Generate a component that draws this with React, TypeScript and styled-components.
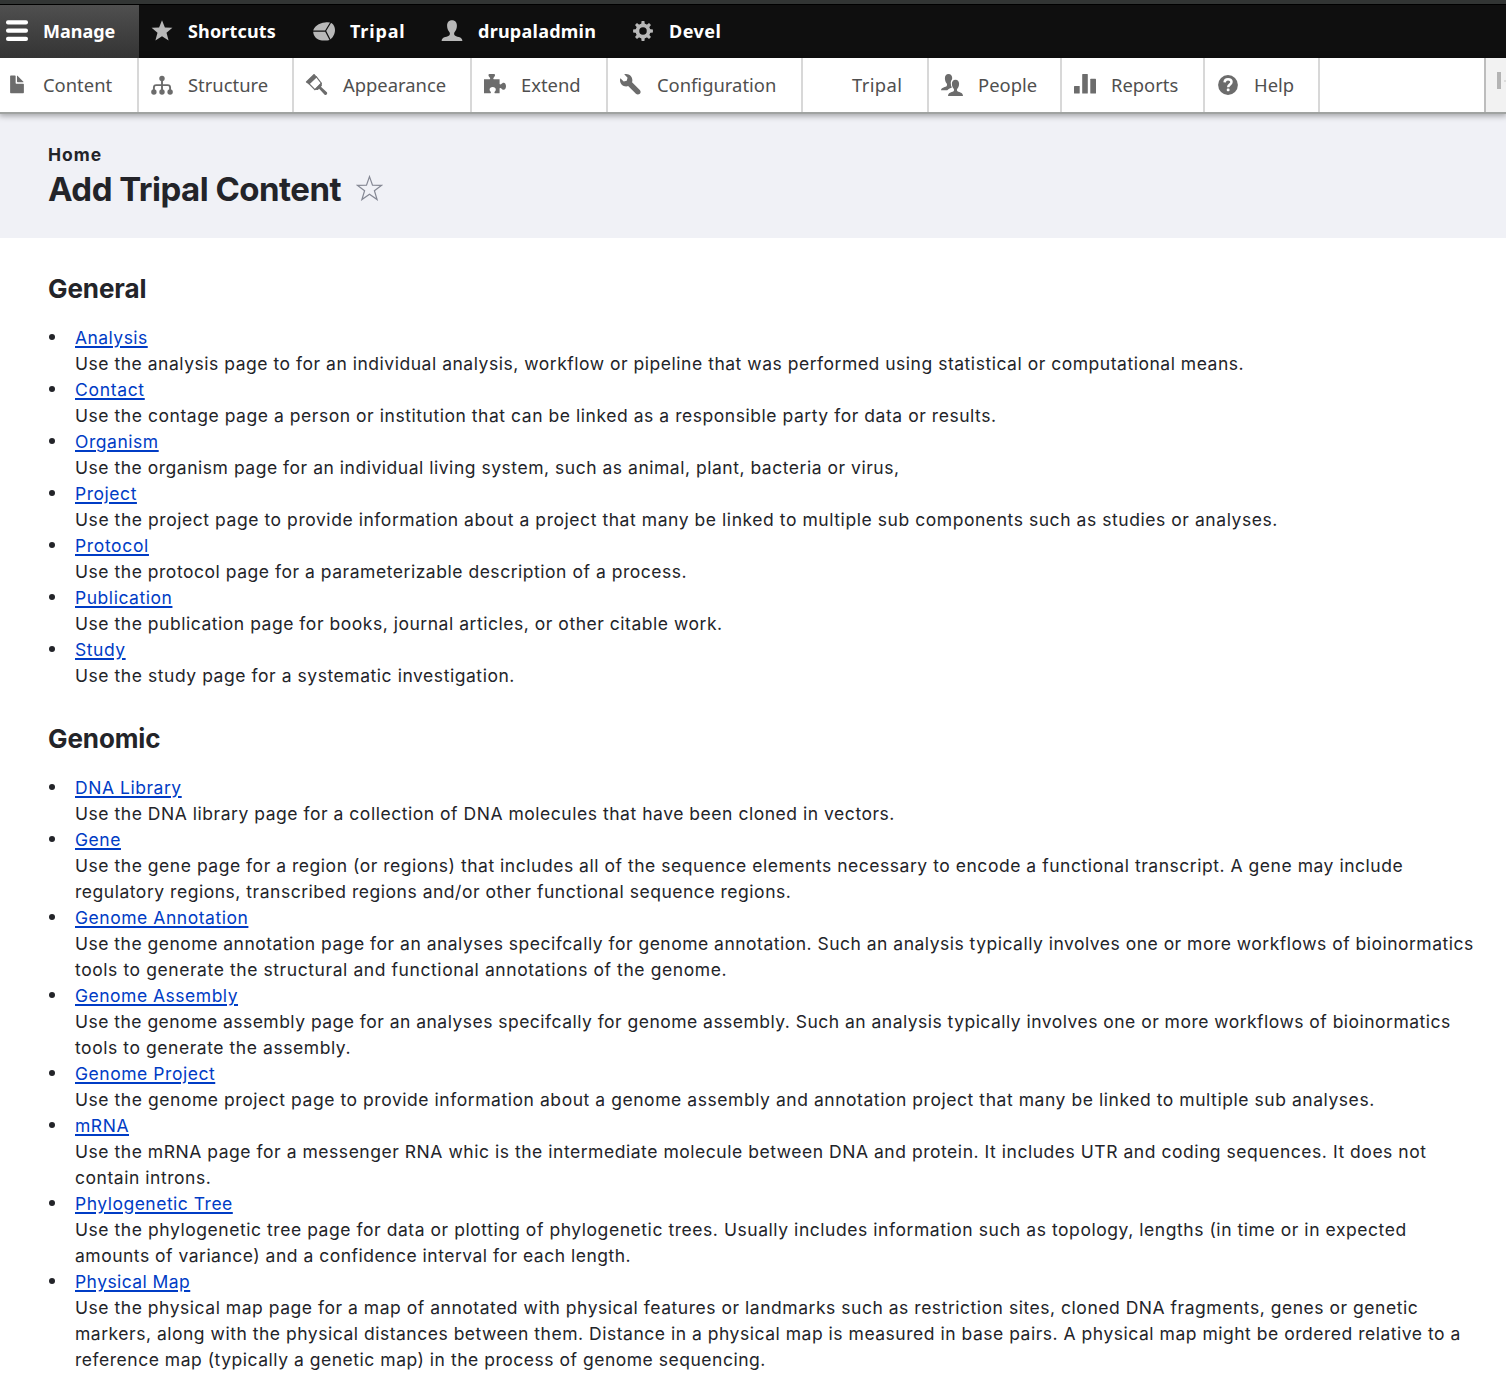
import React from "react";
import styled, { createGlobalStyle } from "styled-components";

const GlobalStyle = createGlobalStyle`
  *, *::before, *::after { box-sizing: border-box; }
  body {
    margin: 0;
    background: #fff;
    color: #232429;
    font-family: Inter, "Noto Sans", sans-serif;
    font-size: 17.5px;
    line-height: 26px;
  }
`;

const Page = styled.div`
  height: 1394px;
  overflow: hidden;
`;

const Toolbar = styled.nav`
  position: relative;
  font-family: "Noto Sans", "Open Sans", sans-serif;
`;

const TopStrip = styled.div`
  height: 5px;
  background: #323534;
  border-bottom: 1px solid #000;
`;

const TabBar = styled.div`
  display: flex;
  height: 53px;
  background: #0f0f0f;
`;

const Tab = styled.a<{ $width: number; $active?: boolean; $tracking?: number }>`
  display: flex;
  align-items: center;
  width: ${(p) => p.$width}px;
  padding-left: ${(p) => (p.$active ? 6 : 12)}px;
  padding-bottom: 2px;
  color: #fff;
  font-size: 18px;
  font-weight: 700;
  letter-spacing: ${(p) => p.$tracking ?? 0.2}px;
  background: ${(p) => (p.$active ? "linear-gradient(#4f4f4f, #343434)" : "transparent")};
`;

const Tray = styled.div`
  display: flex;
  height: 56px;
  background: #fff;
  border-bottom: 2px solid #a0a3a1;
  box-shadow: 0 1px 6px 1px rgba(0, 0, 0, 0.33);
`;

const TrayItem = styled.a<{ $width: number; $first?: boolean; $tracking?: number }>`
  display: flex;
  align-items: center;
  width: ${(p) => p.$width}px;
  padding-left: ${(p) => (p.$first ? 6 : 12)}px;
  border-right: 2px solid #d8d8d8;
  color: #4f4f4f;
  font-size: 18.4px;
  letter-spacing: ${(p) => (p.$tracking ? `${p.$tracking}px` : "normal")};
`;

const IconSlot = styled.span<{ $tone: string; $drop?: boolean }>`
  display: flex;
  flex: none;
  width: 22px;
  height: 22px;
  margin: ${(p) => (p.$drop ? "0 15px 0 0" : "0 15px 1px 0")};
  color: ${(p) => p.$tone};

  svg { width: 22px; height: 22px; overflow: visible; }
`;

const TrayToggle = styled.div`
  display: flex;
  gap: 3px;
  width: 22px;
  margin-left: auto;
  padding: 13.5px 0 0 11px;
  overflow: hidden;
  background: #f2f2f2;
  border-left: 2px solid #bdbdbd;
`;

const ToggleBar = styled.span`
  flex: none;
  width: 4px;
  height: 17px;
  background: #b4b4b4;
`;

const ToggleTip = styled.span`
  flex: none;
  width: 2px;
  height: 2px;
  margin-top: 8px;
  background: #dcdcdc;
`;

const PageHeader = styled.header`
  height: 124px;
  padding: 28px 48px 0;
  background: #f0f1f6;
`;

const Breadcrumb = styled.div`
  font-weight: 700;
  letter-spacing: 1px;
`;

const TitleRow = styled.div`
  display: flex;
  align-items: center;
  gap: 15px;
  height: 40px;
  margin-top: 1px;
`;

const PageTitle = styled.h1`
  margin: 0;
  font-size: 33px;
  font-weight: 700;
  line-height: 40px;
  letter-spacing: -0.52px;
`;

const StarOutline = styled.svg`
  width: 27px;
  height: 26px;
  margin-bottom: 2px;
`;

const Content = styled.main`
  padding: 34px 0 0 48px;
`;

const Section = styled.section`
  margin-bottom: 33px;
`;

const SectionTitle = styled.h2`
  margin: 0 0 19px;
  font-size: 26px;
  font-weight: 700;
  line-height: 34px;
  letter-spacing: -0.1px;
`;

const TypeList = styled.ul`
  margin: 0;
  padding: 0;
  list-style: none;
`;

const TypeItem = styled.li`
  display: flex;

  &::before {
    content: "";
    flex: none;
    width: 6px;
    height: 6px;
    margin: 9px 20px 0 1px;
    border-radius: 50%;
    background: #232429;
  }
`;

const TypeLink = styled.a<{ $tracking?: number }>`
  color: #003cc5;
  letter-spacing: ${(p) => p.$tracking ?? 0.54}px;
  text-decoration: underline;
  text-decoration-thickness: 2px;
  text-underline-offset: 2px;
`;

const Line = styled.div<{ $tracking: number }>`
  letter-spacing: ${(p) => p.$tracking}px;
  white-space: nowrap;
`;

const HamburgerIcon = () => (
  <svg viewBox="0 0 22 22" fill="currentColor">
    <rect x="0" y="0.3" width="22" height="4.2" rx="2" />
    <rect x="0" y="8.5" width="22" height="4.2" rx="2" />
    <rect x="0" y="16.7" width="22" height="4.2" rx="2" />
  </svg>
);

const StarIcon = () => (
  <svg viewBox="0 0 22 22" fill="currentColor">
    <path d="M11 .2l2.900 7.300 7.500.3-5.900 4.900 2.100 7.800L11 16.300l-6.600 4.200 2.100-7.800L.6 7.800l7.500-.3z" />
  </svg>
);

const ChadoIcon = () => (
  <svg viewBox="0 0 22 22">
    <path
      fill="currentColor"
      d="M.2 11.4C.3 7 6 2.700 12 2.400c2.400-.5 5-.3 6.800.8 2.100 1.600 3.200 4.100 3.200 6.800 0 4-2.300 8.300-5.600 10-2 .8-7.400.7-9.700 0C3 19 .1 15 .2 11.400z"
    />
    <path d="M17.800 2.200l-5.300 8.700L17.200 20M12.500 10.900L0 11.200" fill="none" stroke="#0f0f0f" strokeWidth="1.200" />
  </svg>
);

const PersonIcon = () => (
  <svg viewBox="0 0 22 22" fill="currentColor">
    <path d="M11 .3c3.200 0 4.900 2.200 4.900 5.400 0 2.400-.8 4.800-2.400 6.500-.5.9-.6 2.100.1 3 .6.9 2.200 1.300 4.200 1.900 2.300.7 3.500 1.700 3.600 3.900H.6c.1-2.200 1.300-3.200 3.600-3.900 2-.6 3.600-1 4.200-1.900.7-.9.6-2.100.1-3C6.900 10.500 6.100 8.100 6.100 5.700 6.100 2.500 7.800.3 11 .3z" />
  </svg>
);

const GearIcon = () => (
  <svg viewBox="0 0 22 22">
    <g fill="currentColor">
      {[0, 45, 90, 135].map((a) => (
        <path key={a} d="M9.100 5l.5-3.900h2.800l.5 3.900zM9.100 17l.5 3.900h2.800l.5-3.900z" transform={`rotate(${a} 11 11)`} />
      ))}
    </g>
    <circle cx="11" cy="11" r="5.600" fill="none" stroke="currentColor" strokeWidth="3.700" />
  </svg>
);

const FileIcon = () => (
  <svg viewBox="0 0 16 16" fill="currentColor">
    <path d="M12.502 7h-5c-.276 0-.502-.225-.502-.5v-5c0-.275-.225-.5-.5-.5h-3c-.275 0-.5.225-.5.5v12.029c0 .275.225.5.5.5h9.002c.275 0 .5-.225.5-.5v-6.029c0-.275-.225-.5-.5-.5zM8.502 6h4c.275 0 .34-.159.146-.354l-4.293-4.292c-.195-.195-.353-.129-.353.146v4c0 .275.225.5.5.5z" />
  </svg>
);

const StructureIcon = () => (
  <svg viewBox="0 0 22 22" fill="currentColor">
    <circle cx="11" cy="4.400" r="2.700" />
    <circle cx="2.900" cy="18" r="2.700" />
    <circle cx="11" cy="18" r="2.700" />
    <circle cx="19.100" cy="18" r="2.700" />
    <path d="M11 4.400v14M2.900 18v-4.500q0-2.400 2.400-2.400h11.400q2.400 0 2.400 2.400V18" fill="none" stroke="currentColor" strokeWidth="1.900" />
  </svg>
);

const BrushIcon = () => (
  <svg viewBox="0 0 22 22">
    <path d="M3 9.700L10.400 2.800l4.900 6.300-6.400 6.500z" fill="none" stroke="currentColor" strokeWidth="1.100" />
    <path d="M0 7.600L7.500.2c.4-.4.8-.3 1.100.1l2.300 2.600-7.700 7.500L.1 8.500c-.3-.3-.4-.6-.1-.9z" fill="currentColor" />
    <path d="M8.300 15.800l7.400-7.300.2 3.300-1 1 5.700 5.300c.8.8.8 1.700.1 2.400-.7.700-1.600.6-2.300-.1l-5.300-5.700-1.300 1.300z" fill="currentColor" />
  </svg>
);

const PuzzleIcon = () => (
  <svg viewBox="0 0 22 22" fill="currentColor">
    <path d="M0 5.200h5.700c.7-.5.600-1.200 0-1.800C5 2.800 4.300 2 4.500.8 4.600.3 4.900 0 5.400 0h4.700c.5 0 .8.300.9.800.2 1.200-.5 2-1.200 2.600-.6.600-.7 1.300 0 1.800h5.800v4.900c.5.700 1.200.6 1.800 0 .6-.7 1.300-1.300 2.200-1.300 1.500 0 2.400 1.600 2.400 3.500s-.9 3.500-2.400 3.500c-.9 0-1.600-.6-2.200-1.300-.6-.6-1.300-.7-1.800 0v4.800h-4.800c-.6-.6-.4-1.200.1-1.700.5-.5.900-1.100.9-1.900 0-1.500-1.200-2.600-3.100-2.600s-3.100 1.100-3.100 2.600c0 .8.400 1.400.9 1.900.5.500.7 1.100.1 1.700H0z" />
  </svg>
);

const WrenchIcon = () => (
  <svg viewBox="0 0 16 16" fill="currentColor">
    <path d="M14.416 11.586l-.01-.008v-.001l-5.656-5.656c.15-.449.252-.921.252-1.421 0-2.485-2.016-4.500-4.502-4.500-.505 0-.981.102-1.434.255l2.431 2.431-.588 2.196-2.196.588-2.445-2.445c-.162.464-.268.956-.268 1.475 0 2.486 2.014 4.500 4.500 4.500.5 0 .972-.102 1.421-.251l5.667 5.665c.781.781 2.047.781 2.828 0s.781-2.047 0-2.828z" />
  </svg>
);

const PeopleIcon = () => (
  <svg viewBox="0 0 22 22" fill="currentColor">
    <path d="M7.500 0C10 0 11.200 1.700 11.200 4c0 .5-.1 1-.2 1.500-.9 1-1.300 2.300-1.200 3.900 0 1.500.4 2.900 1.100 4.100-1.400.8-3.200 1.300-4.600 2.700H0c.1-1.600 1-2.300 2.600-2.800 1.500-.4 2.700-.8 3.100-1.400.5-.8.400-1.700 0-2.400C4.600 8.300 3.900 6.200 3.900 4.200 3.900 1.700 5.200 0 7.500 0z" />
    <path d="M14.500 5.800c2.400 0 3.600 1.700 3.600 4 0 1.900-.6 3.700-1.800 5-.4.700-.5 1.500 0 2.300.4.700 1.600 1 3.100 1.400 1.700.5 2.500 1.700 2.600 3.400H7c.1-1.700.9-2.900 2.600-3.400 1.500-.4 2.700-.7 3.100-1.400.5-.8.400-1.600 0-2.300-1.200-1.300-1.800-3.100-1.800-5 0-2.300 1.200-4 3.600-4z" />
  </svg>
);

const BarsIcon = () => (
  <svg viewBox="0 0 22 22" fill="currentColor">
    <rect x="0" y="12" width="5.700" height="7.500" rx=".6" />
    <rect x="8.200" y="0" width="5.600" height="19.500" rx=".6" />
    <rect x="16.300" y="4.700" width="5.700" height="14.800" rx=".6" />
  </svg>
);

const HelpIcon = () => (
  <svg viewBox="0 0 22 22">
    <circle cx="11" cy="11" r="9.900" fill="currentColor" />
    <path d="M7.600 8.400C7.700 6.300 9 5.200 11 5.200c2.100 0 3.500 1.100 3.500 2.800 0 2.500-3.300 2.600-3.300 5.300" fill="none" stroke="#fff" strokeWidth="2.500" />
    <rect x="9.800" y="14.600" width="2.700" height="2.600" rx=".8" fill="#fff" />
  </svg>
);

type BarItem = { label: string; width: number; icon?: React.ReactNode; tracking?: number };

const tabs: BarItem[] = [
  { label: "Manage", width: 139, icon: <HamburgerIcon />, tracking: 0 },
  { label: "Shortcuts", width: 162, icon: <StarIcon />, tracking: 0.15 },
  { label: "Tripal", width: 128, icon: <ChadoIcon />, tracking: 0.85 },
  { label: "drupaladmin", width: 191, icon: <PersonIcon />, tracking: 0.25 },
  { label: "Devel", width: 125, icon: <GearIcon />, tracking: 0.5 },
];

const trayItems: BarItem[] = [
  { label: "Content", width: 139, icon: <FileIcon /> },
  { label: "Structure", width: 155, icon: <StructureIcon /> },
  { label: "Appearance", width: 178, icon: <BrushIcon /> },
  { label: "Extend", width: 136, icon: <PuzzleIcon /> },
  { label: "Configuration", width: 195, icon: <WrenchIcon /> },
  { label: "Tripal", width: 126, tracking: 0.4 },
  { label: "People", width: 133, icon: <PeopleIcon /> },
  { label: "Reports", width: 143, icon: <BarsIcon /> },
  { label: "Help", width: 115, icon: <HelpIcon /> },
];

type ContentType = { name: string; linkTracking?: number; lines: [string, number][] };

const sections: { title: string; types: ContentType[] }[] = [
  {
    title: "General",
    types: [
      { name: "Analysis", linkTracking: 0.45, lines: [["Use the analysis page to for an individual analysis, workflow or pipeline that was performed using statistical or computational means.", 0.524]] },
      { name: "Contact", linkTracking: 0.68, lines: [["Use the contage page a person or institution that can be linked as a responsible party for data or results.", 0.545]] },
      { name: "Organism", lines: [["Use the organism page for an individual living system, such as animal, plant, bacteria or virus,", 0.524]] },
      { name: "Project", lines: [["Use the project page to provide information about a project that many be linked to multiple sub components such as studies or analyses.", 0.558]] },
      { name: "Protocol", linkTracking: 0.65, lines: [["Use the protocol page for a parameterizable description of a process.", 0.528]] },
      { name: "Publication", lines: [["Use the publication page for books, journal articles, or other citable work.", 0.53]] },
      { name: "Study", lines: [["Use the study page for a systematic investigation.", 0.55]] },
    ],
  },
  {
    title: "Genomic",
    types: [
      { name: "DNA Library", lines: [["Use the DNA library page for a collection of DNA molecules that have been cloned in vectors.", 0.53]] },
      {
        name: "Gene",
        lines: [
          ["Use the gene page for a region (or regions) that includes all of the sequence elements necessary to encode a functional transcript. A gene may include", 0.531],
          ["regulatory regions, transcribed regions and/or other functional sequence regions.", 0.525],
        ],
      },
      {
        name: "Genome Annotation",
        lines: [
          ["Use the genome annotation page for an analyses specifcally for genome annotation. Such an analysis typically involves one or more workflows of bioinormatics", 0.496],
          ["tools to generate the structural and functional annotations of the genome.", 0.582],
        ],
      },
      {
        name: "Genome Assembly",
        linkTracking: 0.5,
        lines: [
          ["Use the genome assembly page for an analyses specifcally for genome assembly. Such an analysis typically involves one or more workflows of bioinormatics", 0.477],
          ["tools to generate the assembly.", 0.56],
        ],
      },
      { name: "Genome Project", lines: [["Use the genome project page to provide information about a genome assembly and annotation project that many be linked to multiple sub analyses.", 0.553]] },
      {
        name: "mRNA",
        lines: [
          ["Use the mRNA page for a messenger RNA whic is the intermediate molecule between DNA and protein. It includes UTR and coding sequences. It does not", 0.535],
          ["contain introns.", 0.54],
        ],
      },
      {
        name: "Phylogenetic Tree",
        linkTracking: 0.5,
        lines: [
          ["Use the phylogenetic tree page for data or plotting of phylogenetic trees. Usually includes information such as topology, lengths (in time or in expected", 0.553],
          ["amounts of variance) and a confidence interval for each length.", 0.5],
        ],
      },
      {
        name: "Physical Map",
        linkTracking: 0.43,
        lines: [
          ["Use the physical map page for a map of annotated with physical features or landmarks such as restriction sites, cloned DNA fragments, genes or genetic", 0.529],
          ["markers, along with the physical distances between them. Distance in a physical map is measured in base pairs. A physical map might be ordered relative to a", 0.519],
          ["reference map (typically a genetic map) in the process of genome sequencing.", 0.52],
        ],
      },
    ],
  },
];

export default function App() {
  return (
    <Page>
      <GlobalStyle />
      <Toolbar>
        <TopStrip />
        <TabBar>
          {tabs.map((t, i) => (
            <Tab key={t.label} $width={t.width} $active={i === 0} $tracking={t.tracking}>
              <IconSlot $tone={i === 0 ? "#fff" : "#b8b8b8"} $drop>
                {t.icon}
              </IconSlot>
              {t.label}
            </Tab>
          ))}
        </TabBar>
        <Tray>
          {trayItems.map((t, i) => (
            <TrayItem key={t.label} $width={t.width} $first={i === 0} $tracking={t.tracking}>
              <IconSlot $tone="#6c6c6c">{t.icon}</IconSlot>
              {t.label}
            </TrayItem>
          ))}
          <TrayToggle>
            <ToggleBar />
            <ToggleTip />
          </TrayToggle>
        </Tray>
      </Toolbar>
      <PageHeader>
        <Breadcrumb>Home</Breadcrumb>
        <TitleRow>
          <PageTitle>Add Tripal Content</PageTitle>
          <StarOutline viewBox="0 0 27 26">
            <path
              d="M13.500 1.600l3 8.600 9.200.1-7.300 5.400 2.700 8.900-7.600-5.400-7.600 5.400 2.700-8.900L1.300 10.300l9.200-.1z"
              fill="none"
              stroke="#858894"
              strokeWidth="1.200"
            />
          </StarOutline>
        </TitleRow>
      </PageHeader>
      <Content>
        {sections.map((s) => (
          <Section key={s.title}>
            <SectionTitle>{s.title}</SectionTitle>
            <TypeList>
              {s.types.map((type) => (
                <TypeItem key={type.name}>
                  <div>
                    <TypeLink $tracking={type.linkTracking}>{type.name}</TypeLink>
                    {type.lines.map(([text, tracking]) => (
                      <Line key={text} $tracking={tracking}>
                        {text}
                      </Line>
                    ))}
                  </div>
                </TypeItem>
              ))}
            </TypeList>
          </Section>
        ))}
      </Content>
    </Page>
  );
}
